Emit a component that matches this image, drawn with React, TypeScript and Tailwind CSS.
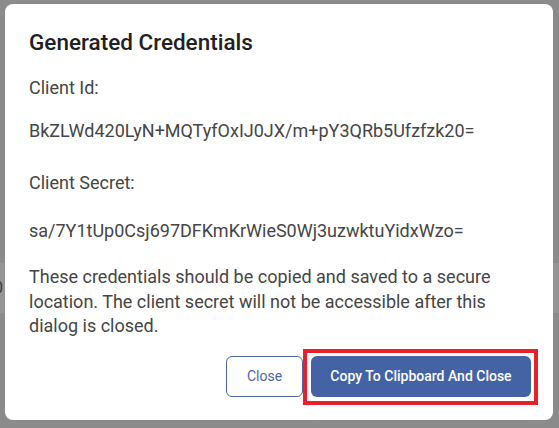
import React from "react";

export default function App() {
  return (
    <div
      className="relative w-[559px] h-[428px] overflow-hidden bg-[#8b8b8b]"
      style={{ fontFamily: "Roboto, 'Liberation Sans', sans-serif" }}
    >
      {/* underlying page band */}
      <div className="absolute left-0 top-[263px] w-full h-[50px] bg-[#949494]">
        <span className="absolute left-[-6px] top-[13px] text-[16px] text-[#3a3a3a]">0</span>
      </div>
      <div className="relative pt-[4px] pl-[5px]">
        <div className="w-[548px] h-[416px] bg-white rounded-[8px] flex flex-col px-[24px] pt-[24px] pb-[23px]">
          <h2 className="text-[22.5px] leading-[28px] font-medium text-[#212121]">Generated Credentials</h2>
          <div className="mt-[20px] text-[18px] leading-[24px] text-[#454545] flex flex-col">
            <p>Client Id:</p>
            <p className="mt-[19px]">BkZLWd420LyN+MQTyfOxIJ0JX/m+pY3QRb5Ufzfzk20=</p>
            <p className="mt-[28px]">Client Secret:</p>
            <p className="mt-[24px]">sa/7Y1tUp0Csj697DFKmKrWieS0Wj3uzwktuYidxWzo=</p>
            <p className="mt-[22px] leading-[24.5px]">
              These credentials should be copied and saved to a secure location. The client secret will not be accessible after this dialog is closed.
            </p>
          </div>
          <div className="mt-auto flex justify-end items-center gap-[8px] mr-[-2px]">
            <button className="h-[41px] w-[77px] rounded-[6px] border border-[#4a67a8] text-[#4a67a8] text-[14px] bg-white">
              Close
            </button>
            <div className="relative">
              <button className="h-[41px] w-[220px] rounded-[6px] bg-[#4363a5] text-white text-[14px] font-medium">
                Copy To Clipboard And Close
              </button>
              <div className="absolute left-[-8px] right-[-7px] top-[-7px] bottom-[-8px] border-4 border-[#e8202a] pointer-events-none" />
            </div>
          </div>
        </div>
      </div>
    </div>
  );
}
